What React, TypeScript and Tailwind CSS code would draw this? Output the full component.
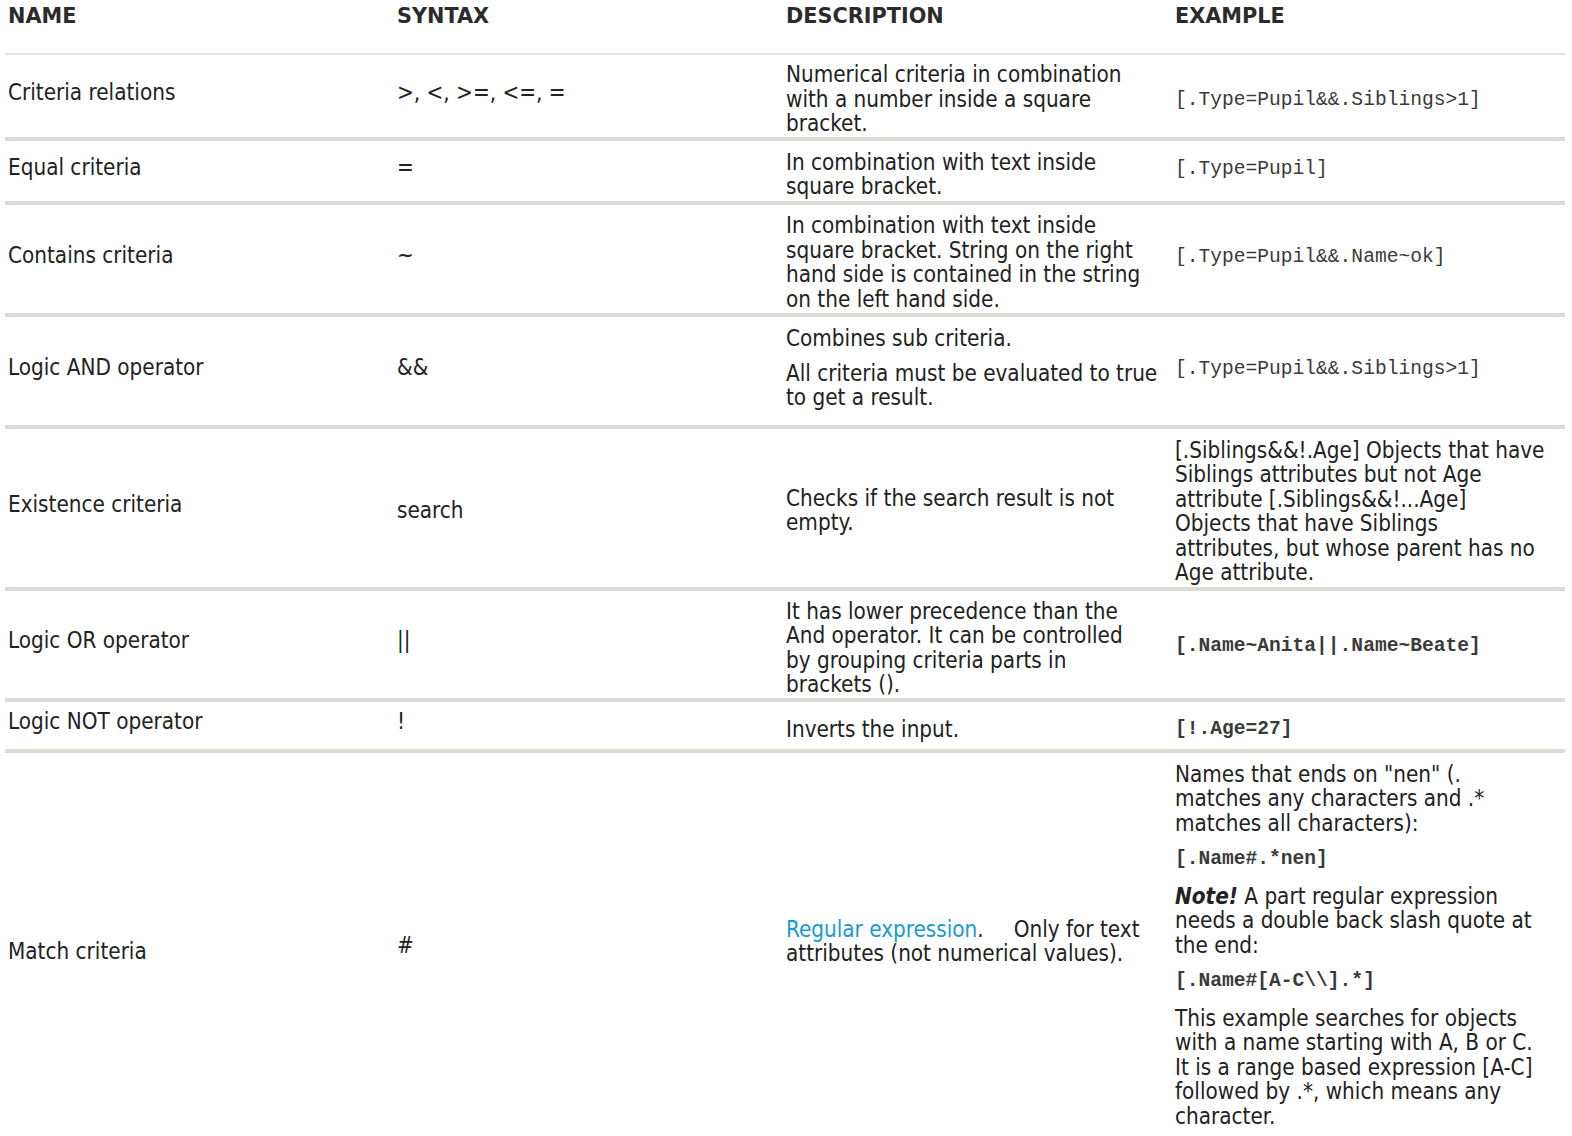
import React from 'react'

const sans = "font-['DejaVu_Sans_Condensed','DejaVu_Sans',sans-serif]"
const mono = "font-['Liberation_Mono','Courier_New',monospace] text-[19.6px] leading-[24.5px] text-[#3a3a3a]"
const cols = 'grid grid-cols-[389px_389px_389px_393px] items-center border-b-4 border-[#dcdcd4]'

function Lines({ lines }: { lines: string[] }) {
  return (
    <>
      {lines.map((l, i) => (
        <span key={i} className="block whitespace-nowrap">{l}</span>
      ))}
    </>
  )
}

export default function App() {
  return (
    <div className={`${sans} bg-white text-[22.3px] leading-[24.5px] text-[#222] min-h-[1136px]`}>
      <div className="ml-[5px] w-[1560px]">
        {/* Header */}
        <div className="grid grid-cols-[389px_389px_389px_393px] h-[55px] border-b-2 border-[#e6e6e0] font-['DejaVu_Sans',sans-serif] font-bold text-[20.8px] text-[#2b2b2b]">
          <div className="pl-[3px] pt-[4px]">NAME</div>
          <div className="pl-[3px] pt-[4px]">SYNTAX</div>
          <div className="pl-[3px] pt-[4px]">DESCRIPTION</div>
          <div className="pl-[3px] pt-[4px]">EXAMPLE</div>
        </div>

        {/* Criteria relations */}
        <div className={`${cols} h-[86px]`}>
          <div className="pl-[3px] pb-2">Criteria relations</div>
          <div className="pl-[3px] pb-2">&gt;, &lt;, &gt;=, &lt;=, =</div>
          <div className="pl-[3px] pt-1.5">
            <Lines lines={['Numerical criteria in combination', 'with a number inside a square', 'bracket.']} />
          </div>
          <div className={`pl-[3px] pt-2 ${mono}`}>[.Type=Pupil&amp;&amp;.Siblings&gt;1]</div>
        </div>

        {/* Equal criteria */}
        <div className={`${cols} h-[64px]`}>
          <div className="pl-[3px] pb-2">Equal criteria</div>
          <div className="pl-[3px] pb-2">=</div>
          <div className="pl-[3px] pt-1.5">
            <Lines lines={['In combination with text inside', 'square bracket.']} />
          </div>
          <div className={`pl-[3px] pb-1 ${mono}`}>[.Type=Pupil]</div>
        </div>

        {/* Contains criteria */}
        <div className={`${cols} h-[112px]`}>
          <div className="pl-[3px] pb-2">Contains criteria</div>
          <div className="pl-[3px] pb-2">~</div>
          <div className="pl-[3px] pt-1.5">
            <Lines
              lines={[
                'In combination with text inside',
                'square bracket. String on the right',
                'hand side is contained in the string',
                'on the left hand side.',
              ]}
            />
          </div>
          <div className={`pl-[3px] pb-1 ${mono}`}>[.Type=Pupil&amp;&amp;.Name~ok]</div>
        </div>

        {/* Logic AND operator */}
        <div className={`${cols} h-[112px]`}>
          <div className="pl-[3px] pb-2">Logic AND operator</div>
          <div className="pl-[3px] pb-2">&amp;&amp;</div>
          <div className="pl-[3px] pb-1.5 flex flex-col gap-[10px]">
            <span className="block">Combines sub criteria.</span>
            <div>
              <Lines lines={['All criteria must be evaluated to true', 'to get a result.']} />
            </div>
          </div>
          <div className={`pl-[3px] pb-1 ${mono}`}>[.Type=Pupil&amp;&amp;.Siblings&gt;1]</div>
        </div>

        {/* Existence criteria */}
        <div className={`${cols} h-[162px]`}>
          <div className="pl-[3px] pb-2">Existence criteria</div>
          <div className="pl-[3px] pt-1">search</div>
          <div className="pl-[3px] pt-1">
            <Lines lines={['Checks if the search result is not', 'empty.']} />
          </div>
          <div className="pl-[3px] pt-1.5">
            <Lines
              lines={[
                '[.Siblings&&!.Age] Objects that have',
                'Siblings attributes but not Age',
                'attribute [.Siblings&&!...Age]',
                'Objects that have Siblings',
                'attributes, but whose parent has no',
                'Age attribute.',
              ]}
            />
          </div>
        </div>

        {/* Logic OR operator */}
        <div className={`${cols} h-[111px]`}>
          <div className="pl-[3px] pb-2">Logic OR operator</div>
          <div className="pl-[3px] pb-2">||</div>
          <div className="pl-[3px] pt-1.5">
            <Lines
              lines={[
                'It has lower precedence than the',
                'And operator. It can be controlled',
                'by grouping criteria parts in',
                'brackets ().',
              ]}
            />
          </div>
          <div className={`pl-[3px] pt-1 ${mono} font-bold`}>[.Name~Anita||.Name~Beate]</div>
        </div>

        {/* Logic NOT operator */}
        <div className={`${cols} h-[51px]`}>
          <div className="pl-[3px] pb-2">Logic NOT operator</div>
          <div className="pl-[3px] pb-2">!</div>
          <div className="pl-[3px] pt-2">Inverts the input.</div>
          <div className={`pl-[3px] pt-2 ${mono} font-bold`}>[!.Age=27]</div>
        </div>

        {/* Match criteria */}
        <div className="grid grid-cols-[389px_389px_389px_393px] items-center h-[384px]">
          <div className="pl-[3px] pt-3">Match criteria</div>
          <div className="pl-[3px]">#</div>
          <div className="pl-[3px] pb-2">
            <span className="block whitespace-nowrap">
              <span className="text-[#189ad3]">Regular expression</span>.
              <span className="ml-[30px]">Only for text</span>
            </span>
            <span className="block whitespace-nowrap">attributes (not numerical values).</span>
          </div>
          <div className="pl-[3px] flex flex-col gap-[12px]">
            <div>
              <Lines
                lines={['Names that ends on "nen" (.', 'matches any characters and .*', 'matches all characters):']}
              />
            </div>
            <div className={`${mono} font-bold`}>[.Name#.*nen]</div>
            <div>
              <span className="block whitespace-nowrap">
                <b className="italic">Note!</b> A part regular expression
              </span>
              <span className="block whitespace-nowrap">needs a double back slash quote at</span>
              <span className="block whitespace-nowrap">the end:</span>
            </div>
            <div className={`${mono} font-bold`}>[.Name#[A-C\\].*]</div>
            <div>
              <Lines
                lines={[
                  'This example searches for objects',
                  'with a name starting with A, B or C.',
                  'It is a range based expression [A-C]',
                  'followed by .*, which means any',
                  'character.',
                ]}
              />
            </div>
          </div>
        </div>
      </div>
    </div>
  )
}
